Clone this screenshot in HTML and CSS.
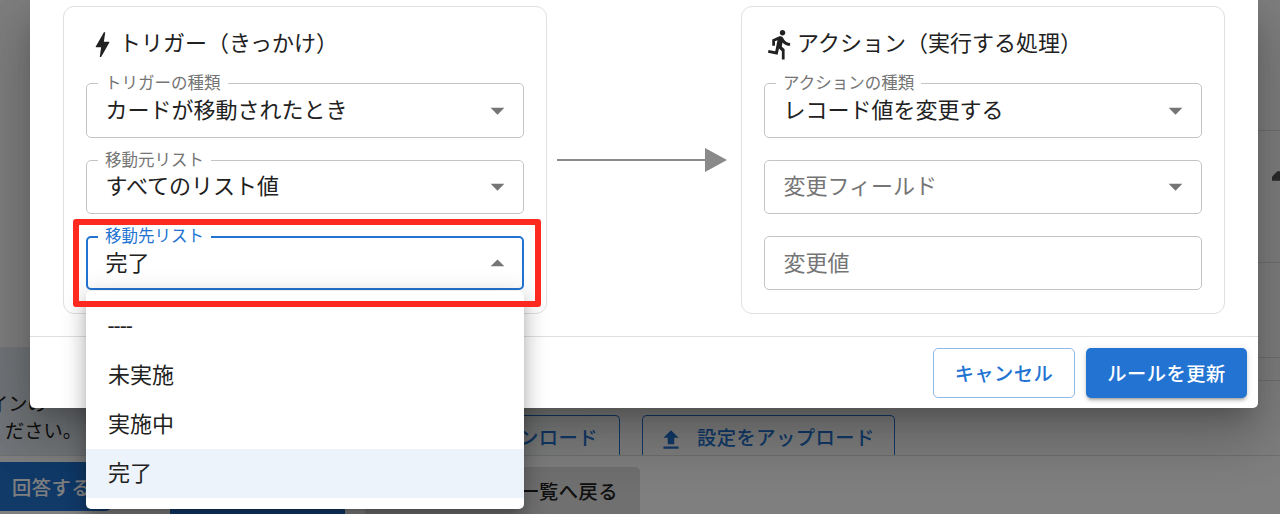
FILE: index.html
```html
<!DOCTYPE html>
<html lang="ja">
<head>
<meta charset="utf-8">
<title>ルール編集</title>
<link rel="stylesheet" href="styles.css">
</head>
<body>
<div class="page">
  <main class="page-main">
    <section class="info">
      <p class="info-text"><span class="info-cut">インの</span><br><span>ださい。</span></p>
      <div class="tabs">
        <div class="tab tab-download">ンロード</div>
        <div class="tab tab-upload">
          <svg class="tab-icon" viewBox="0 0 24 24"><path d="M9 16h6v-6h4l-7-7-7 7h4zm-4 2h14v2H5z"/></svg>
          <span>設定をアップロード</span>
        </div>
      </div>
    </section>
    <section class="actions">
      <div class="bg-btn bg-answer">回答する</div>
      <div class="bg-btn bg-dark"></div>
      <div class="bg-btn bg-back">一覧へ戻る</div>
    </section>
  </main>
  <aside class="page-side">
    <div class="side-row side-r1"></div>
    <div class="side-row side-r2"><svg class="side-mark" viewBox="0 0 12 14"><path d="M0 14V8L8 0h4v14z"/></svg></div>
    <div class="side-row side-r3"></div>
    <div class="side-row side-r4"></div>
    <div class="side-row side-r5"></div>
  </aside>
</div>
<div class="overlay"></div>
<div class="dialog">
  <div class="dialog-body">
    <section class="card">
      <h2 class="card-title">
        <svg class="title-icon" viewBox="0 0 24 24"><path d="M11 21h-1l1-7H7.5c-.58 0-.57-.32-.38-.66.19-.34.05-.08.07-.12C8.48 10.94 10.42 7.54 13 3h1l-1 7h3.5c.49 0 .56.33.47.51l-.07.15C12.96 17.55 11 21 11 21z"/></svg>
        <span>トリガー（きっかけ）</span>
      </h2>
      <div class="fields">
        <div class="field">
          <label class="field-label">トリガーの種類</label>
          <span class="field-value">カードが移動されたとき</span>
          <svg class="caret" viewBox="0 0 24 24"><path d="M7 10l5 5 5-5z"/></svg>
        </div>
        <div class="field">
          <label class="field-label">移動元リスト</label>
          <span class="field-value">すべてのリスト値</span>
          <svg class="caret" viewBox="0 0 24 24"><path d="M7 10l5 5 5-5z"/></svg>
        </div>
        <div class="field field-open">
          <label class="field-label">移動先リスト</label>
          <span class="field-value">完了</span>
          <svg class="caret" viewBox="0 0 24 24"><path d="M7 14l5-5 5 5z"/></svg>
          <ul class="menu">
            <li class="menu-item">----</li>
            <li class="menu-item">未実施</li>
            <li class="menu-item">実施中</li>
            <li class="menu-item menu-item-selected">完了</li>
          </ul>
          <div class="highlight"></div>
        </div>
      </div>
    </section>
    <div class="flow-arrow">
      <svg viewBox="0 0 170 24" class="flow-svg"><path d="M0 11h148v2H0z"/><path d="M148 0l22 12-22 12z"/></svg>
    </div>
    <section class="card">
      <h2 class="card-title">
        <svg class="title-icon" viewBox="0 0 24 24"><path d="M13.49 5.48c1.1 0 2-.9 2-2s-.9-2-2-2-2 .9-2 2 .9 2 2 2zm-3.6 13.9l1-4.4 2.1 2v6h2v-7.5l-2.1-2 .6-3c1.3 1.5 3.3 2.5 5.5 2.5v-2c-1.9 0-3.5-1-4.3-2.4l-1-1.6c-.4-.6-1-1-1.7-1-.3 0-.5.1-.8.1l-5.2 2.2v4.7h2v-3.4l1.8-.7-1.6 8.1-4.9-1-.4 2 7 1.4z"/></svg>
        <span>アクション（実行する処理）</span>
      </h2>
      <div class="fields">
        <div class="field">
          <label class="field-label">アクションの種類</label>
          <span class="field-value">レコード値を変更する</span>
          <svg class="caret" viewBox="0 0 24 24"><path d="M7 10l5 5 5-5z"/></svg>
        </div>
        <div class="field">
          <span class="field-value field-placeholder">変更フィールド</span>
          <svg class="caret" viewBox="0 0 24 24"><path d="M7 10l5 5 5-5z"/></svg>
        </div>
        <div class="field">
          <span class="field-value field-placeholder">変更値</span>
        </div>
      </div>
    </section>
  </div>
  <footer class="dialog-footer">
    <button class="btn btn-outline" type="button">キャンセル</button>
    <button class="btn btn-primary" type="button">ルールを更新</button>
  </footer>
</div>
</body>
</html>
```
FILE: styles.css
```css
* { box-sizing: border-box; }
html, body { margin: 0; height: 100%; }
body {
  width: 1280px;
  height: 514px;
  overflow: hidden;
  position: relative;
  background: #fff;
  color: #212121;
  font-family: Roboto, "Noto Sans CJK JP", sans-serif;
}

/* page behind the dialog */
.page { display: flex; height: 514px; }
.page-main { flex: 1; display: flex; flex-direction: column; padding-top: 347px; }
.info {
  height: 109px;
  display: flex;
  justify-content: space-between;
  align-items: flex-end;
  border-bottom: 1px solid #e0e0e0;
  background: linear-gradient(90deg, #e4ebf2 0, #fff 640px);
}
.info-text { margin: 0 0 10px; font-size: 19.25px; line-height: 27px; padding-left: 5px; }
.info-cut { margin-left: -16px; }
.tabs { display: flex; gap: 22px; margin-right: 363px; }
.tab {
  height: 40px;
  padding-top: 3px;
  border: 1px solid #2374d2;
  border-bottom: 0;
  border-radius: 5px 5px 0 0;
  color: #2374d2;
  font-size: 19.25px;
  font-weight: 500;
  letter-spacing: .5px;
  display: flex;
  align-items: center;
}
.tab-download { width: 200px; justify-content: flex-end; padding-right: 21px; }
.tab-upload { width: 253px; padding-left: 15px; gap: 13px; white-space: nowrap; }
.tab-icon { width: 26px; height: 26px; margin-top: 6px; fill: currentColor; flex: none; }
.actions { flex: 1; display: flex; align-items: flex-start; overflow: hidden; }
.bg-btn { border-radius: 5px; font-size: 19.25px; font-weight: 500; letter-spacing: .5px; display: flex; align-items: center; flex: none; }
.bg-answer { width: 111px; height: 49px; margin-top: 6px; padding-left: 12px; background: #2374d2; color: #fff; border-radius: 0 5px 5px 0; }
.bg-dark { width: 175px; height: 40px; margin: 49px 0 0 59px; background: #2374d2; }
.bg-back { width: 275px; height: 60px; margin: 11px 0 0 20px; padding: 0 22px 12px 0; justify-content: flex-end; background: #e0e0e0; }
.page-side { width: 22px; flex: none; display: flex; flex-direction: column; }
.side-row { border-bottom: 1px solid #e0e0e0; flex: none; }
.side-r1 { height: 131px; }
.side-r2 { height: 132px; padding: 39px 0 0 14px; }
.side-mark { display: block; width: 8px; height: 12px; fill: #555; }
.side-r3 { height: 95px; }
.side-r4 { height: 23px; }
.side-r5 { height: 75px; }

.overlay { position: absolute; inset: 0; background: rgba(0, 0, 0, .5); }

/* dialog */
.dialog {
  position: absolute;
  left: 30px;
  top: 0;
  width: 1228px;
  height: 408px;
  display: flex;
  flex-direction: column;
  background: #fff;
  border-radius: 0 0 5px 5px;
  box-shadow: 0 15px 21px -10px rgba(0,0,0,.2), 0 33px 52px 4px rgba(0,0,0,.14), 0 12px 63px 11px rgba(0,0,0,.12);
}
.dialog-body {
  height: 337px;
  padding: 6px 33px 0;
  display: flex;
  align-items: flex-start;
  border-bottom: 1px solid #e0e0e0;
}
.card {
  width: 484px;
  height: 308px;
  flex: none;
  border: 1px solid #e0e0e0;
  border-radius: 11px;
  padding: 0 22px;
}
.card-title {
  margin: 0;
  height: 76.3px;
  padding-top: 20px;
  display: flex;
  align-items: flex-start;
  font-size: 22px;
  font-weight: 400;
  line-height: 33px;
  white-space: nowrap;
}
.title-icon { width: 33px; height: 33px; margin-top: 1px; flex: none; fill: #212121; }
.fields { display: flex; flex-direction: column; gap: 22px; }
.field {
  position: relative;
  height: 54.4px;
  display: flex;
  align-items: center;
  justify-content: space-between;
  border: 1px solid #c4c4c4;
  border-radius: 5px;
  padding: 0 9.5px 0 18.5px;
  font-size: 22px;
}
.field-label {
  position: absolute;
  left: 11px;
  top: -11px;
  padding: 0 7px;
  background: #fff;
  font-size: 16.5px;
  line-height: 22px;
  color: #757575;
  white-space: nowrap;
}
.field-value { line-height: 33px; white-space: nowrap; }
.field-placeholder { color: #757575; }
.caret { width: 33px; height: 33px; fill: #757575; flex: none; }
.field-open { border: 2px solid #2374d2; padding: 0 8.5px 0 17.5px; }
.field-open .field-label { color: #2374d2; left: 10px; top: -12px; }

.menu {
  position: absolute;
  left: -2px;
  top: 52.9px;
  width: 438px;
  margin: 0;
  padding: 11px 0;
  list-style: none;
  background: #fff;
  border-radius: 5px;
  box-shadow: 0 7px 11px -4px rgba(0,0,0,.2), 0 11px 20px 1px rgba(0,0,0,.14), 0 4px 25px 4px rgba(0,0,0,.12);
}
.menu-item {
  height: 49px;
  padding: 0 0 0 22px;
  display: flex;
  align-items: center;
  font-size: 22px;
  white-space: nowrap;
}
.menu-item + .menu-item { padding: 0 0 4px 22px; }
.menu-item-selected { background: #edf3fb; }
.highlight {
  position: absolute;
  left: -15px;
  top: -19.1px;
  width: 468px;
  height: 88px;
  border: 6px solid #ff2a1f;
  border-radius: 3px;
  pointer-events: none;
}

.flow-arrow { width: 194px; height: 308px; flex: none; display: flex; align-items: center; padding-left: 10px; }
.flow-svg { width: 170px; height: 24px; fill: #8a8a8a; display: block; }

.dialog-footer {
  flex: 1;
  display: flex;
  justify-content: flex-end;
  align-items: flex-start;
  gap: 11px;
  padding: 11px 11px 0 0;
}
.btn {
  height: 50px;
  border-radius: 5px;
  font: 500 19.25px Roboto, "Noto Sans CJK JP", sans-serif;
  letter-spacing: .5px;
  cursor: pointer;
}
.btn-outline { width: 142px; background: #fff; color: #2374d2; border: 1px solid #90bae8; }
.btn-primary {
  width: 161px;
  background: #2374d2;
  color: #fff;
  border: 0;
  box-shadow: 0 4px 2px -3px rgba(0,0,0,.2), 0 3px 3px 0 rgba(0,0,0,.14), 0 1px 7px 0 rgba(0,0,0,.12);
}
```
